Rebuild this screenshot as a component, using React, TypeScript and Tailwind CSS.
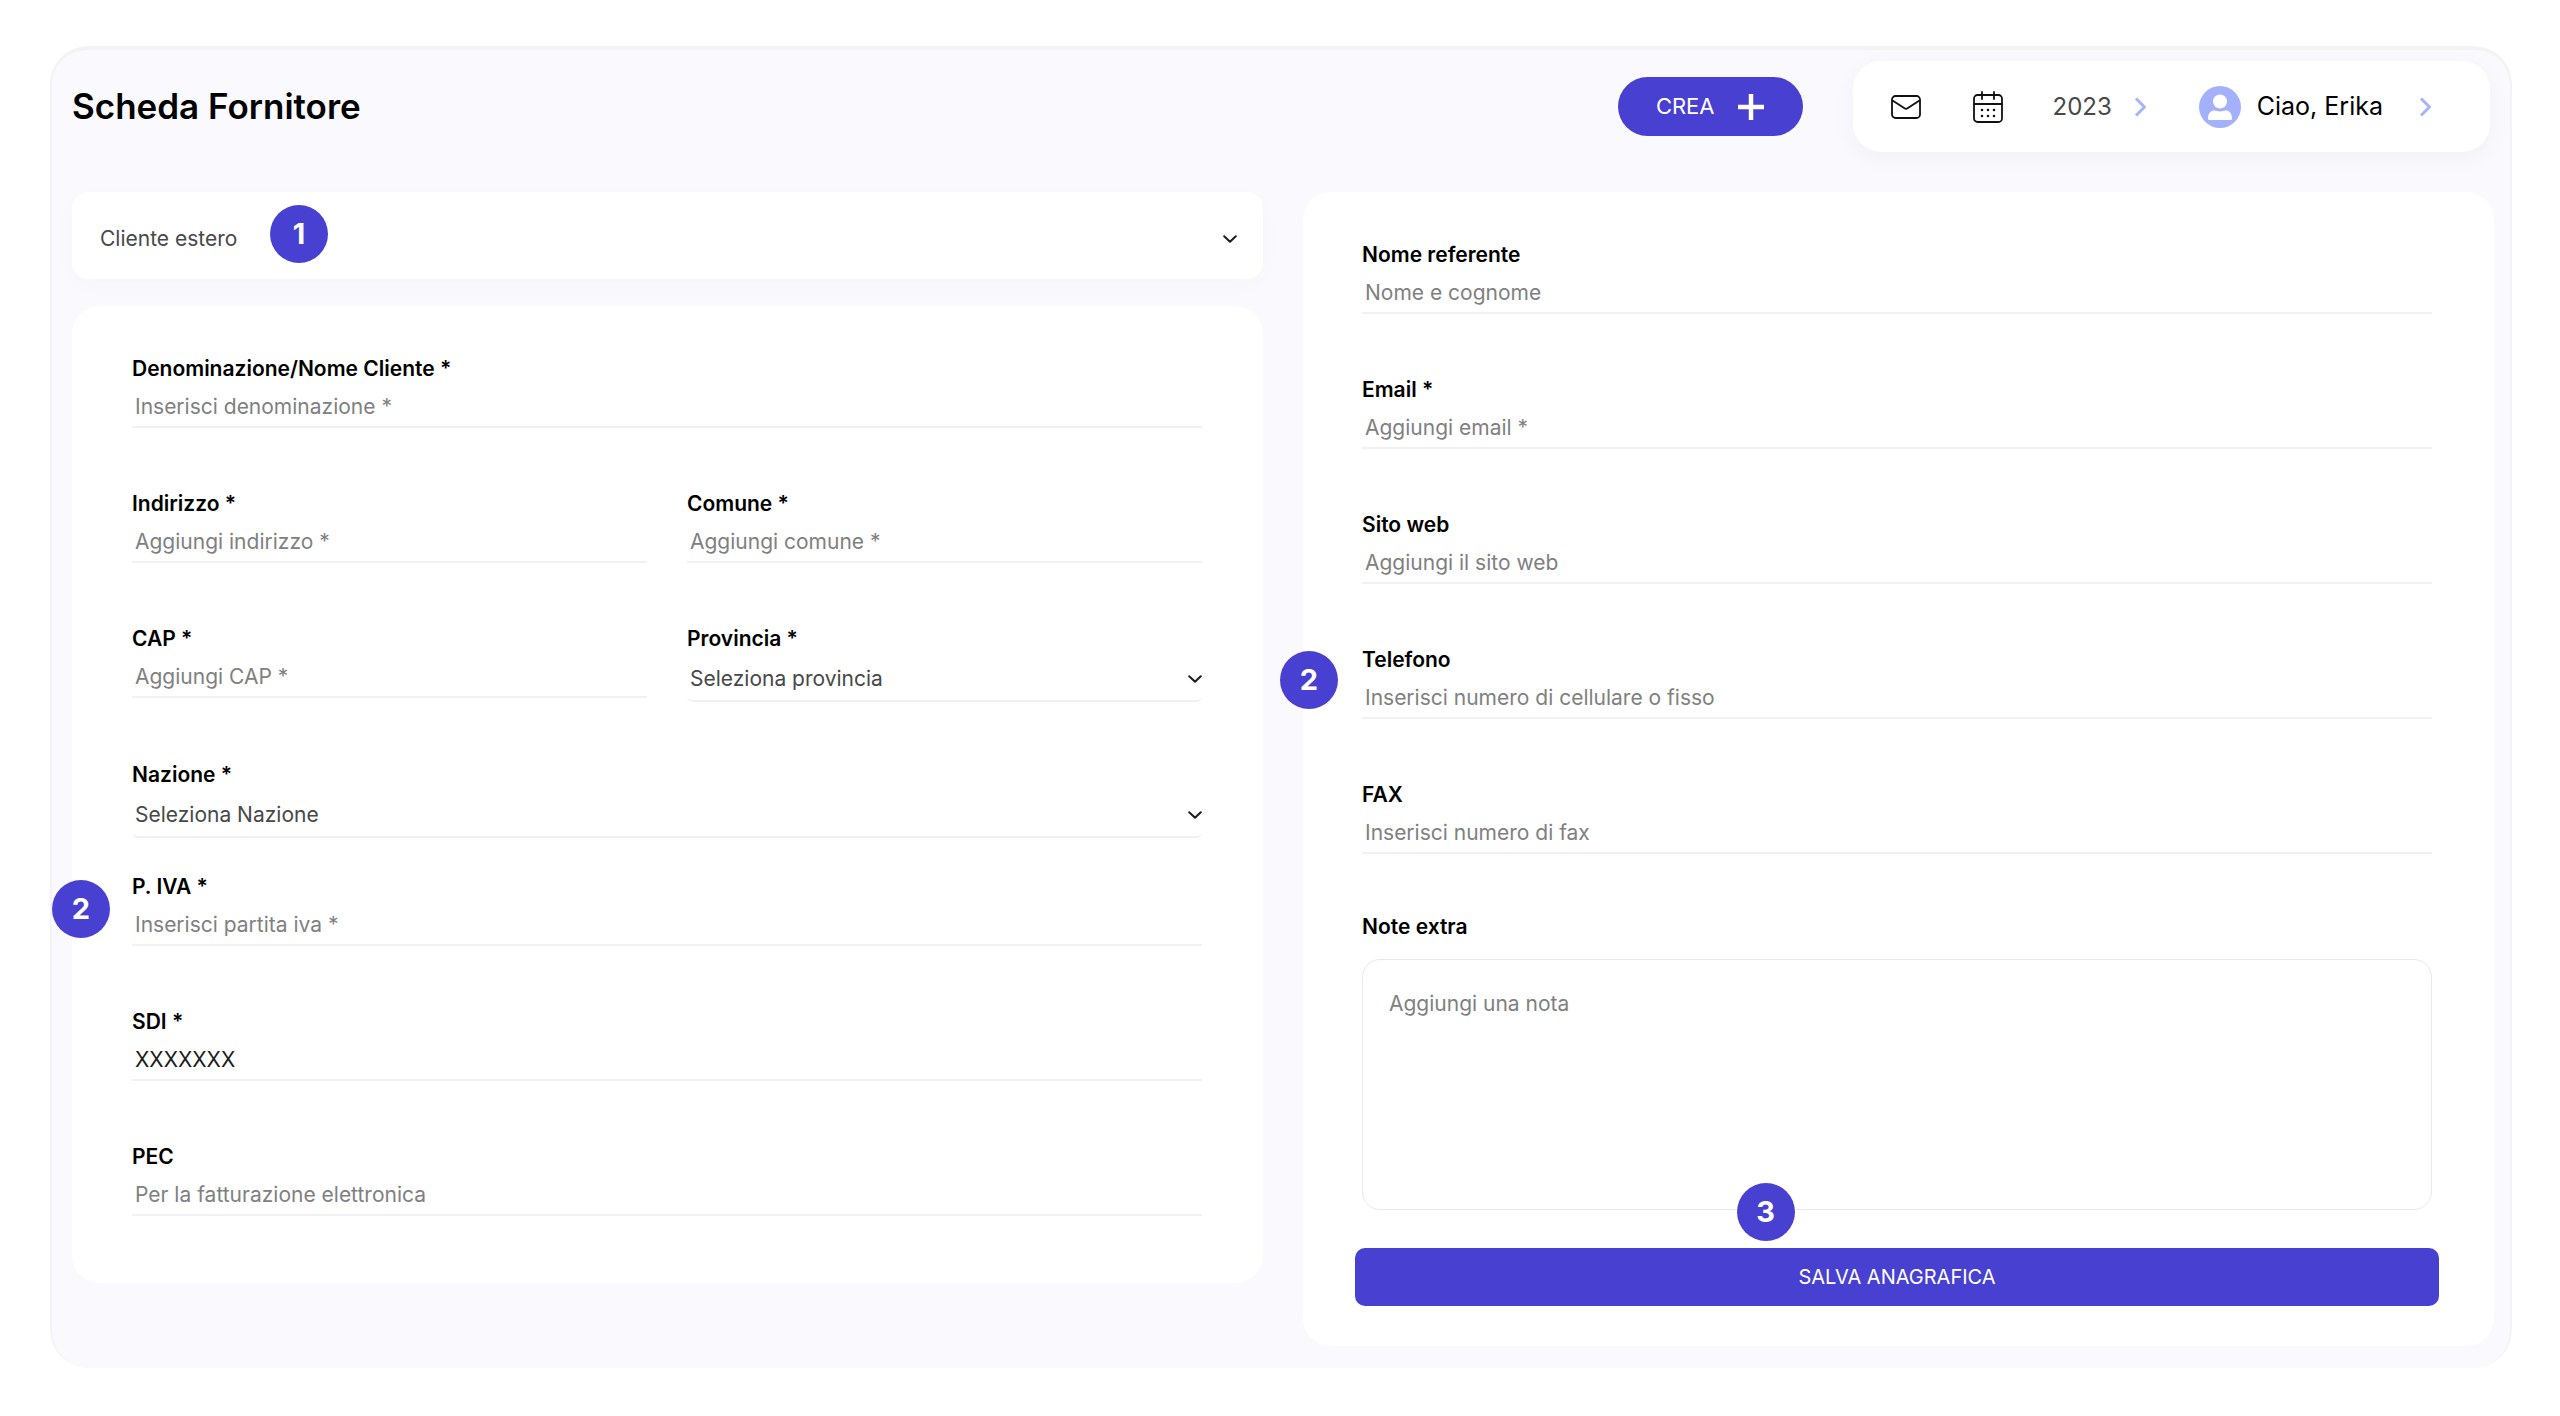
import type { ReactNode } from "react";
import clsx from "clsx";

function Chevron({ className }: { className?: string }) {
  return (
    <svg viewBox="0 0 14 8" className={clsx("pointer-events-none h-2 w-3.5", className)} fill="none" stroke="#1c1c1c" strokeWidth="2" strokeLinecap="round" strokeLinejoin="round">
      <path d="M1.2 1.2 7 6.8l5.8-5.6" />
    </svg>
  );
}

function ChevronRight() {
  return (
    <svg viewBox="0 0 13 20" className="h-5 w-[13px] shrink-0" fill="none" stroke="#a5b4fb" strokeWidth="3" strokeLinejoin="round">
      <path d="m2 1.500 8.500 8.500L2 18.500" />
    </svg>
  );
}

function MailIcon() {
  return (
    <svg viewBox="0 0 30 24" className="h-6 w-[30px]" fill="none" stroke="#111" strokeWidth="1.800" strokeLinejoin="round">
      <rect x="1" y="1" width="28" height="22" rx="3.500" />
      <path d="m1.500 5.500 12 7.800a2.500 2.500 0 0 0 3 0l12-7.800" />
    </svg>
  );
}

function CalendarIcon() {
  return (
    <svg viewBox="0 0 30 32" className="h-8 w-[30px]" fill="none" stroke="#111" strokeWidth="1.800" strokeLinecap="round">
      <rect x="1" y="4" width="28" height="27" rx="3.500" />
      <path d="M1 13h28M9 1v7M21 1v7" />
      <path d="M9 19h.01M15 19h.01M21 19h.01M9 25h.01M15 25h.01M21 25h.01" strokeWidth="2.600" />
    </svg>
  );
}

function Avatar() {
  return (
    <svg viewBox="0 0 42 42" className="size-[42px]">
      <circle cx="21" cy="21" r="21" fill="#a3b0fb" />
      <circle cx="21" cy="15.500" r="7" fill="#fff" />
      <path d="M9 32.500c0-5.500 3-8 6.500-8 2 0 3.200 1 5.500 1s3.500-1 5.500-1c3.500 0 6.500 2.500 6.500 8 0 1-.5 1.500-1.500 1.500h-21C9.500 34 9 33.500 9 32.500Z" fill="#fff" />
    </svg>
  );
}

function Step({ n, className }: { n: number; className: string }) {
  return (
    <span className={clsx("absolute flex size-[58px] items-center justify-center rounded-full bg-[#4740d1] text-[29px] font-bold text-white", className)}>
      {n}
    </span>
  );
}

function Label({ htmlFor, children }: { htmlFor: string; children: ReactNode }) {
  return (
    <label htmlFor={htmlFor} className="block text-[21px] leading-[26px] font-semibold text-black">
      {children}
    </label>
  );
}

type FieldProps = {
  id: string;
  label: string;
  placeholder?: string;
  value?: string;
  className?: string;
  children?: ReactNode;
};

function Field({ id, label, placeholder, value, className = "pb-[63px]", children }: FieldProps) {
  return (
    <div className={clsx("relative", className)}>
      <Label htmlFor={id}>{label}</Label>
      <input
        id={id}
        placeholder={placeholder}
        defaultValue={value}
        className="block h-[46px] w-full border-b-2 border-[#f1f1f3] px-[3px] pt-1 text-[21px] text-[#1c1c1c] outline-none placeholder:text-[#808080]"
      />
      {children}
    </div>
  );
}

function SelectField({ id, label, value, className }: { id: string; label: string; value: string; className: string }) {
  return (
    <div className={className}>
      <Label htmlFor={id}>{label}</Label>
      <div className="relative">
        <select
          id={id}
          className="block h-[50px] w-full appearance-none rounded-md border-b-2 border-[#f1f1f3] px-[3px] pt-1.5 text-[21px] text-[#484848] outline-none"
        >
          <option>{value}</option>
        </select>
        <Chevron className="absolute top-[23px] right-0" />
      </div>
    </div>
  );
}

export default function App() {
  return (
    <div className="bg-white pt-[46px] pr-12 pb-12 pl-[50px] font-['Inter',sans-serif]">
      <div className="rounded-[38px] border-x-2 border-t-4 border-[#f3f3f5] bg-[#faf9fe] pt-[11px] pr-4 pb-[22px] pl-5">
        <header className="flex items-center justify-between pr-1">
          <h1 className="text-[35px] font-semibold text-black">Scheda Fornitore</h1>

          <div className="flex items-center gap-[50px]">
            <button className="flex h-[59px] items-center gap-[22px] rounded-full bg-[#4740d1] px-[38px] text-[22px] text-white">
              CREA
              <svg viewBox="0 0 28 28" className="size-7" stroke="#fff" strokeWidth="4.500">
                <path d="M14 1v26M1 14h26" />
              </svg>
            </button>

            <nav className="flex h-[91px] items-center rounded-[28px] bg-white pr-[58px] pl-[38px] shadow-[0_6px_24px_rgba(0,0,0,0.04)]">
              <button aria-label="Messaggi">
                <MailIcon />
              </button>
              <button aria-label="Calendario" className="ml-[52px]">
                <CalendarIcon />
              </button>
              <button className="ml-[50px] flex items-center gap-[22px] text-2xl text-[#484848]">
                2023
                <ChevronRight />
              </button>
              <button className="ml-[52px] flex items-center text-[25px] text-black">
                <Avatar />
                <span className="mr-9 ml-4">Ciao, Erika</span>
                <ChevronRight />
              </button>
            </nav>
          </div>
        </header>

        <form className="mt-10 grid grid-cols-2 items-start gap-10">
          <div className="space-y-[27px]">
            <div className="relative rounded-2xl bg-white shadow-[0_6px_24px_rgba(0,0,0,0.02)]">
              <select
                aria-label="Tipo di cliente"
                className="block h-[87px] w-full appearance-none px-7 pt-1.5 text-[21px] text-[#484848] outline-none"
              >
                <option>Cliente estero</option>
              </select>
              <Chevron className="absolute top-[43px] right-[26px]" />
              <Step n={1} className="top-[13px] left-[198px]" />
            </div>

            <div className="rounded-[28px] bg-white pt-[50px] pr-[61px] pb-1 pl-[60px]">
              <Field id="denominazione" label="Denominazione/Nome Cliente *" placeholder="Inserisci denominazione *" />
              <div className="grid grid-cols-2 gap-x-10">
                <Field id="indirizzo" label="Indirizzo *" placeholder="Aggiungi indirizzo *" />
                <Field id="comune" label="Comune *" placeholder="Aggiungi comune *" />
                <Field id="cap" label="CAP *" placeholder="Aggiungi CAP *" />
                <SelectField id="provincia" label="Provincia *" value="Seleziona provincia" className="pb-[60px]" />
              </div>
              <SelectField id="nazione" label="Nazione *" value="Seleziona Nazione" className="pb-9" />
              <Field id="piva" label="P. IVA *" placeholder="Inserisci partita iva *">
                <Step n={2} className="top-1.5 -left-20" />
              </Field>
              <Field id="sdi" label="SDI *" value="XXXXXXX" />
              <Field id="pec" label="PEC" placeholder="Per la fatturazione elettronica" />
            </div>
          </div>

          <div className="rounded-[28px] bg-white pt-[50px] pr-[62px] pb-10 pl-[59px]">
            <Field id="referente" label="Nome referente" placeholder="Nome e cognome" />
            <Field id="email" label="Email *" placeholder="Aggiungi email *" />
            <Field id="sito" label="Sito web" placeholder="Aggiungi il sito web" />
            <Field id="telefono" label="Telefono" placeholder="Inserisci numero di cellulare o fisso">
              <Step n={2} className="top-1 -left-[82px]" />
            </Field>
            <Field id="fax" label="FAX" placeholder="Inserisci numero di fax" className="pb-[60px]" />

            <Label htmlFor="note">Note extra</Label>
            <div className="relative mt-[19px]">
              <textarea
                id="note"
                placeholder="Aggiungi una nota"
                className="block h-[251px] w-full resize-none rounded-[18px] border border-[#e9e9eb] px-[26px] py-7 text-[21px] leading-8 outline-none placeholder:text-[#808080]"
              />
              <Step n={3} className="-bottom-[31px] left-[35%]" />
            </div>
            <div className="-mx-[7px] mt-[38px]">
              <button type="button" className="h-[58px] w-full rounded-[10px] bg-[#4740d1] text-[20px] text-white">
                SALVA ANAGRAFICA
              </button>
            </div>
          </div>
        </form>
      </div>
    </div>
  );
}
